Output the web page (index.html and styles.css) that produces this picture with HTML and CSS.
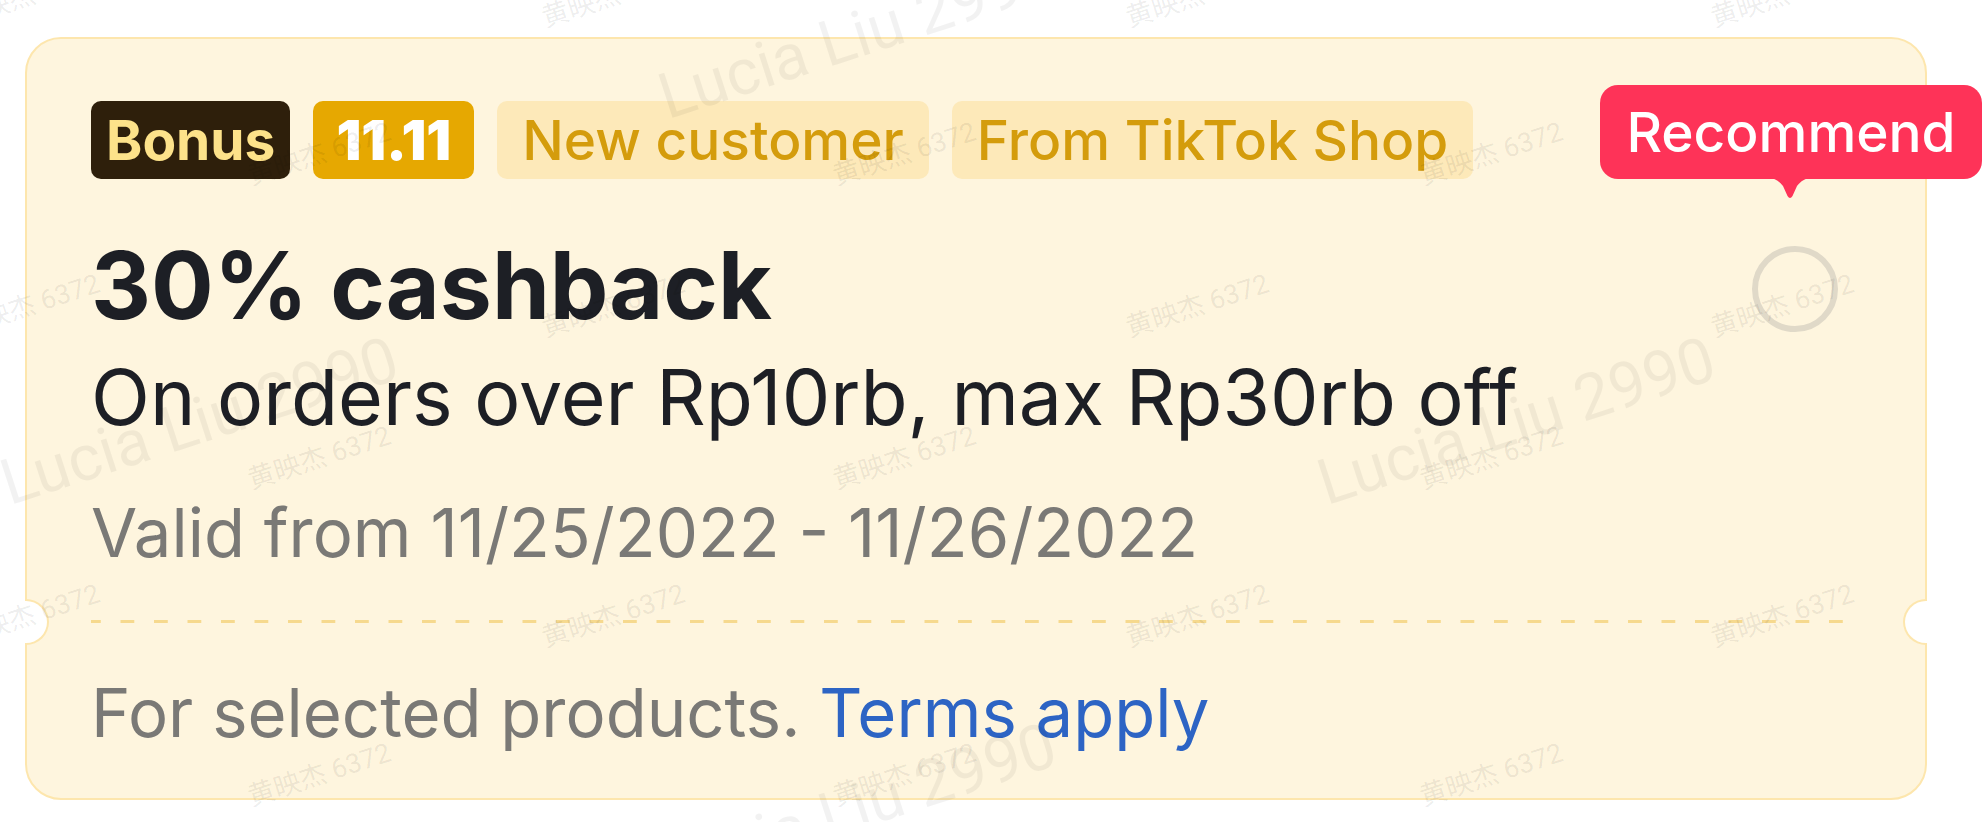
FILE: index.html
```html
<!DOCTYPE html>
<html lang="en">
<head>
<meta charset="utf-8">
<title>Coupon</title>
<link rel="stylesheet" href="styles.css">
</head>
<body>
<div class="page">
  <div class="coupon">
    <div class="coupon-main">
      <div class="info">
        <div class="tags">
          <span class="tag tag-bonus">Bonus</span>
          <span class="tag tag-sale">11.11</span>
          <span class="tag tag-light">New customer</span>
          <span class="tag tag-light">From TikTok Shop</span>
        </div>
        <div class="title">30% cashback</div>
        <div class="desc">On orders over Rp10rb, max Rp30rb off</div>
        <div class="valid">Valid from 11/25/2022 - 11/26/2022</div>
      </div>
      <div class="side">
        <span class="radio"></span>
      </div>
    </div>
    <div class="divider"></div>
    <div class="footer">For selected products. <span class="link">Terms apply</span></div>
    <span class="notch notch-left"></span>
    <span class="notch notch-right"></span>
  </div>
  <div class="recommend">
    Recommend
    <svg class="recommend-tip" width="44" height="22" viewBox="0 0 44 22" aria-hidden="true">
      <path d="M0 0 H44 C37 0 33 3 29 8 L24.5 18 Q22 22 19.5 18 L15 8 C11 3 7 0 0 0 Z" fill="#fe3358"/>
    </svg>
  </div>

  <div class="watermarks">
    <span class="wm" style="left:-38px;top:32px">黄映杰 6372</span>
    <span class="wm" style="left:547px;top:32px">黄映杰 6372</span>
    <span class="wm" style="left:1131px;top:32px">黄映杰 6372</span>
    <span class="wm" style="left:1716px;top:32px">黄映杰 6372</span>
    <span class="wm" style="left:253px;top:190px">黄映杰 6372</span>
    <span class="wm" style="left:838px;top:190px">黄映杰 6372</span>
    <span class="wm" style="left:1425px;top:190px">黄映杰 6372</span>
    <span class="wm" style="left:-38px;top:342px">黄映杰 6372</span>
    <span class="wm" style="left:547px;top:342px">黄映杰 6372</span>
    <span class="wm" style="left:1131px;top:342px">黄映杰 6372</span>
    <span class="wm" style="left:1716px;top:342px">黄映杰 6372</span>
    <span class="wm" style="left:253px;top:494px">黄映杰 6372</span>
    <span class="wm" style="left:838px;top:494px">黄映杰 6372</span>
    <span class="wm" style="left:1425px;top:494px">黄映杰 6372</span>
    <span class="wm" style="left:-38px;top:652px">黄映杰 6372</span>
    <span class="wm" style="left:547px;top:652px">黄映杰 6372</span>
    <span class="wm" style="left:1131px;top:652px">黄映杰 6372</span>
    <span class="wm" style="left:1716px;top:652px">黄映杰 6372</span>
    <span class="wm" style="left:253px;top:811px">黄映杰 6372</span>
    <span class="wm" style="left:838px;top:811px">黄映杰 6372</span>
    <span class="wm" style="left:1425px;top:811px">黄映杰 6372</span>
    <span class="wm wm-big" style="left:671px;top:130px">Lucia Liu 2990</span>
    <span class="wm wm-big" style="left:13px;top:516px">Lucia Liu 2990</span>
    <span class="wm wm-big" style="left:1330px;top:516px">Lucia Liu 2990</span>
    <span class="wm wm-big" style="left:671px;top:902px">Lucia Liu 2990</span>
  </div>
</div>
</body>
</html>
```

FILE: styles.css
```css
* { box-sizing: border-box; }

html, body {
  margin: 0;
  padding: 0;
  background: #ffffff;
}

body {
  font-family: Inter, Roboto, "Noto Sans", "Noto Sans CJK SC", sans-serif;
  color: #1d1f25;
  width: 1986px;
  height: 822px;
  overflow: hidden;
}

.page {
  position: relative;
  width: 1986px;
  height: 822px;
  padding: 37px 0 0 25px;
}

.coupon {
  position: relative;
  width: 1902px;
  height: 763px;
  background: #fef5de;
  border: 2px solid #fde6ad;
  border-radius: 36px;
  padding: 62px 64px 0 64px;
  display: flex;
  flex-direction: column;
}

.coupon-main {
  display: flex;
  justify-content: space-between;
}

.info {
  display: flex;
  flex-direction: column;
}

.tags {
  display: flex;
  gap: 23px;
  height: 78px;
}

.tag {
  display: flex;
  align-items: center;
  height: 78px;
  border-radius: 10px;
  font-size: 55px;
  line-height: 1;
}

.tag-bonus {
  background: #2e1f0b;
  color: #fde28a;
  font-weight: 700;
  padding: 0 15px;
}

.tag-sale {
  background: #e6a801;
  color: #ffffff;
  font-weight: 900;
  padding: 0 23px;
  letter-spacing: 0;
}

.tag-light {
  background: #fde9b9;
  color: #d49c0c;
  font-weight: 500;
  padding: 0 25px;
}

.title {
  margin-top: 56px;
  font-size: 93px;
  font-weight: 700;
  line-height: 100px;
  color: #1d1f25;
}

.desc {
  margin-top: 17px;
  font-size: 77px;
  line-height: 90px;
  color: #1d1f25;
}

.valid {
  margin-top: 51px;
  font-size: 67px;
  line-height: 80px;
  color: #7a7976;
}

.side {
  padding-top: 145px;
  padding-right: 23px;
  display: flex;
  justify-content: flex-end;
}

.radio {
  display: block;
  width: 86px;
  height: 86px;
  border-radius: 50%;
  border: 6px solid #e0d9c8;
}

.divider {
  margin-top: 47px;
  height: 3px;
  background-image: linear-gradient(90deg, #f6d98e 0 14px, transparent 14px);
  background-size: 33.5px 3px;
  background-repeat: repeat-x;
  background-position: -4px 0;
}

.footer {
  margin-top: 50px;
  font-size: 67px;
  line-height: 80px;
  color: #7a7976;
}

.link {
  color: #2d64c4;
}

.notch {
  position: absolute;
  top: 560px;
  width: 24px;
  height: 46px;
  background: #ffffff;
  border: 2px solid #fde6ad;
}

.notch-left {
  left: -2px;
  border-left: none;
  border-radius: 0 23px 23px 0;
}

.notch-right {
  right: -2px;
  border-right: none;
  border-radius: 23px 0 0 23px;
}

.recommend {
  position: absolute;
  left: 1600px;
  top: 85px;
  width: 382px;
  height: 94px;
  border-radius: 18px;
  background: #fe3358;
  color: #ffffff;
  font-size: 55px;
  font-weight: 500;
  line-height: 94px;
  text-align: center;
}

.recommend-tip {
  position: absolute;
  left: 168px;
  top: 93px;
  display: block;
}

.watermarks {
  position: absolute;
  inset: 0;
  pointer-events: none;
  overflow: hidden;
}

.wm {
  position: absolute;
  font-family: Roboto, "Noto Sans CJK SC", sans-serif;
  font-size: 27px;
  line-height: 1;
  color: rgba(0, 0, 0, 0.08);
  white-space: nowrap;
  transform-origin: 0 100%;
  transform: translateY(-100%) rotate(-18deg);
}

.wm-big {
  font-size: 64px;
  color: rgba(0, 0, 0, 0.05);
}
```
